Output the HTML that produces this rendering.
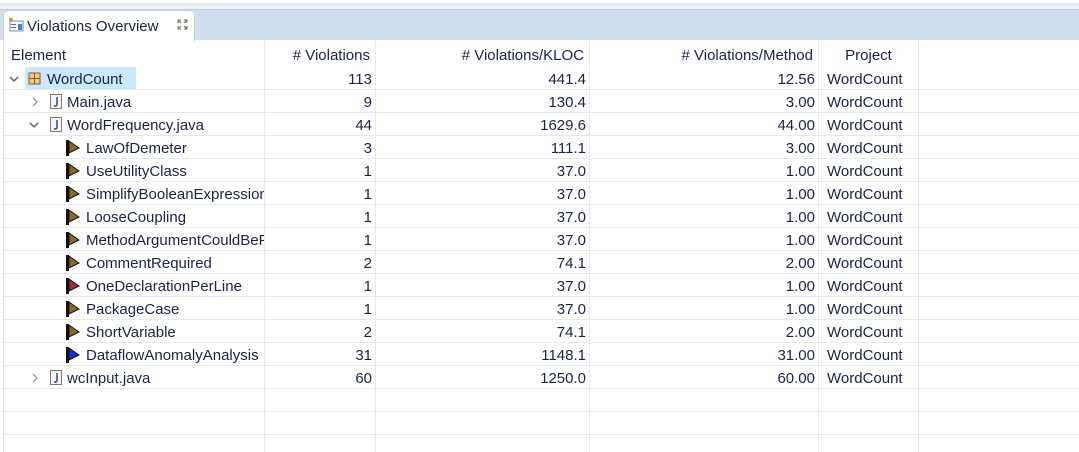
<!DOCTYPE html>
<html><head><meta charset="utf-8"><style>
body{margin:0;width:1079px;height:452px;overflow:hidden;background:#fff;font-family:"Liberation Sans",sans-serif;font-size:15px;color:#1a2440;position:relative}
.a{position:absolute}
.vl{position:absolute;top:40px;height:412px;width:1px;background:#e8e8e8}
.hl{position:absolute;left:4px;width:1075px;height:1px;background:#e8e8e8}
.t{position:absolute;white-space:nowrap;line-height:23px;height:23px}
.r{text-align:right}
</style></head><body>
<div class="a" style="left:0;top:3px;width:1079px;height:2px;background:#e4e6ea"></div>
<div class="a" style="left:0;top:5px;width:1079px;height:4px;background:#eef0f8"></div>
<div class="a" style="left:0;top:9px;width:1079px;height:31px;background:#d0deee;border-top:1px solid #c4cfdc;box-sizing:border-box"></div>
<div class="a" style="left:3px;top:10px;width:192px;height:31px;background:#fff;border:1px solid #c8d2de;border-bottom:none;border-radius:5px 5px 0 0;box-sizing:border-box"></div>
<svg class="a" style="left:8px;top:16px" width="16" height="16" viewBox="0 0 16 16">
<rect x="1" y="2" width="4" height="3" fill="#d8a040"/><rect x="2" y="5" width="13" height="10" fill="#f4f6fa" stroke="#7890a8"/><rect x="3" y="8" width="5" height="1" fill="#5070a0"/><rect x="3" y="11" width="5" height="1" fill="#5070a0"/><rect x="10" y="8" width="4" height="6" fill="#4a80c8"/></svg>
<div class="t" style="left:27px;top:15px;color:#1a2440">Violations Overview</div>
<svg class="a" style="left:177px;top:19px" width="11" height="11"><path d="M1 1l3 3M10 1l-3 3M1 10l3-3M10 10l-3-3M1 1h3M1 1v3M10 1h-3M10 1v3M1 10h3M1 10v-3M10 10h-3M10 10v-3" stroke="#6a6a50" fill="none"/></svg>
<div class="a" style="left:3px;top:40px;width:1px;height:412px;background:#e0e0e0"></div>
<div class="vl" style="left:264px"></div><div class="vl" style="left:375px"></div><div class="vl" style="left:589px"></div><div class="vl" style="left:818px"></div><div class="vl" style="left:918px"></div>
<div class="t" style="left:11px;top:44px">Element</div>
<div class="t r" style="left:265px;width:105px;top:44px"># Violations</div>
<div class="t r" style="left:376px;width:208px;top:44px"># Violations/KLOC</div>
<div class="t r" style="left:590px;width:223px;top:44px"># Violations/Method</div>
<div class="t" style="left:819px;width:99px;top:44px;text-align:center">Project</div>
<div class="a" style="left:25px;top:67px;width:111px;height:22px;background:#cce8ff"></div>
<div id="rows"></div>
<script>
var rows=[
[0,"v","pkg","WordCount","113","441.4","12.56"],
[1,">","java","Main.java","9","130.4","3.00"],
[1,"v","java","WordFrequency.java","44","1629.6","44.00"],
[2,"","f","LawOfDemeter","3","111.1","3.00"],
[2,"","f","UseUtilityClass","1","37.0","1.00"],
[2,"","f","SimplifyBooleanExpressions","1","37.0","1.00"],
[2,"","f","LooseCoupling","1","37.0","1.00"],
[2,"","f","MethodArgumentCouldBeFinal","1","37.0","1.00"],
[2,"","f","CommentRequired","2","74.1","2.00"],
[2,"","r","OneDeclarationPerLine","1","37.0","1.00"],
[2,"","f","PackageCase","1","37.0","1.00"],
[2,"","f","ShortVariable","2","74.1","2.00"],
[2,"","b","DataflowAnomalyAnalysis","31","1148.1","31.00"],
[1,">","java","wcInput.java","60","1250.0","60.00"]];
var h="";
for(var i=0;i<rows.length;i++){var r=rows[i],y=67+23*i,ty=y+1;
var tx=[47,67,86][r[0]];
if(r[1]=="v")h+='<svg class="a" style="left:'+(r[0]?29:9)+'px;top:'+(y+9)+'px" width="10" height="7"><path d="M1 1l4 4 4-4" fill="none" stroke="#555" stroke-width="1.3"/></svg>';
if(r[1]==">")h+='<svg class="a" style="left:32px;top:'+(y+7)+'px" width="7" height="10"><path d="M1 1l4 4-4 4" fill="none" stroke="#999" stroke-width="1.3"/></svg>';
if(r[2]=="pkg")h+='<svg class="a" style="left:28px;top:'+(y+5)+'px" width="13" height="13"><rect x="1" y="1" width="11" height="11" fill="#f0c890" stroke="#8a5a20"/><path d="M6.5 1v11M1 6.5h11" stroke="#8a5a20"/></svg>';
if(r[2]=="java")h+='<svg class="a" style="left:50px;top:'+(y+4)+'px" width="12" height="15"><rect x="0.5" y="0.5" width="11" height="14" fill="#f4f4f0" stroke="#8a7a60"/><path d="M7 3v7q0 2-2 2H4" fill="none" stroke="#2a4a9a" stroke-width="1.5"/></svg>';
if(r[2]=="f"||r[2]=="r"||r[2]=="b"){var c={f:"#8a6a20",r:"#a03030",b:"#1a2ae0"}[r[2]];
h+='<svg class="a" style="left:66px;top:'+(y+4)+'px" width="14" height="16"><rect x="0" y="0" width="3" height="16" fill="#111"/><path d="M3 1L13 8L3 13Z" fill="'+c+'" stroke="#111" stroke-width="1"/></svg>';}
h+='<div class="t" style="left:'+tx+'px;top:'+ty+'px;width:'+(264-tx)+'px;overflow:hidden">'+r[3]+'</div>';
h+='<div class="t r" style="left:265px;width:107px;top:'+ty+'px">'+r[4]+'</div>';
h+='<div class="t r" style="left:376px;width:210px;top:'+ty+'px">'+r[5]+'</div>';
h+='<div class="t r" style="left:590px;width:225px;top:'+ty+'px">'+r[6]+'</div>';
h+='<div class="t" style="left:827px;top:'+ty+'px">WordCount</div>';}
for(var j=0;j<17;j++){var yy=89+23*j;if(yy>452)break;h+='<div class="hl" style="top:'+yy+'px"></div>';}
document.getElementById("rows").innerHTML=h;
</script>
</body></html>
